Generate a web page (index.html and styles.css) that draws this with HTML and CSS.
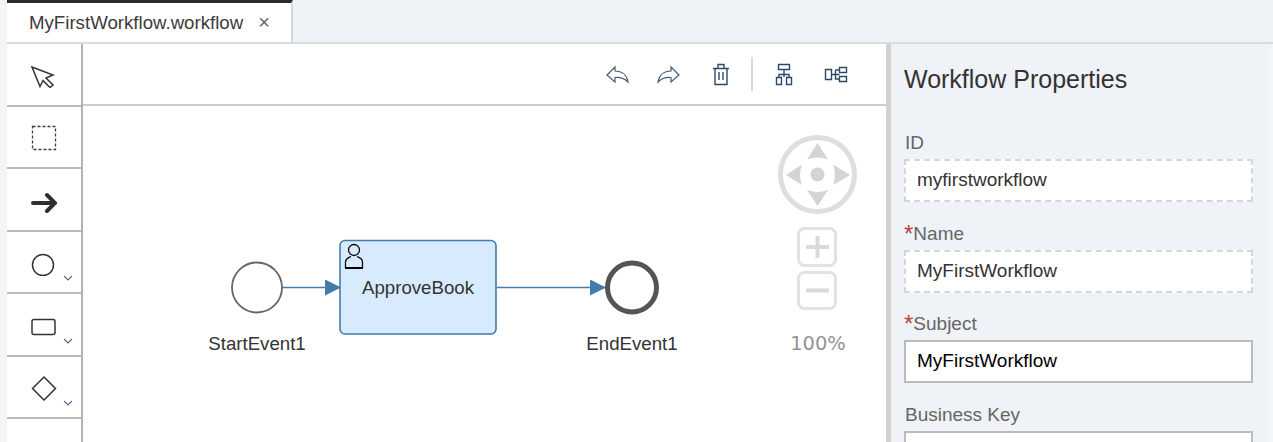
FILE: index.html
```html
<!DOCTYPE html>
<html lang="en">
<head>
    <meta charset="UTF-8">
    <title>MyFirstWorkflow.workflow</title>
    <link rel="stylesheet" href="styles.css">
</head>
<body>
    <div class="shell">
        <div class="tabbar">
            <div class="tab">
                <span class="tab-name">MyFirstWorkflow.workflow</span>
                <span class="tab-close">×</span>
            </div>
        </div>

        <div class="editor">
            <div class="palette">
                <div class="palette-item">
                    <svg width="28" height="28" viewBox="0 0 28 28"><path class="pal-line" d="M3 7 L24 15 L17 18 L24 25 L21 27.5 L14 20.5 L11 26.5 Z"/></svg>
                </div>
                <div class="palette-item">
                    <svg width="28" height="28" viewBox="0 0 28 28"><rect x="3.5" y="3.5" width="23" height="23" fill="none" stroke="#3a3a4a" stroke-width="1.3" stroke-dasharray="3 2"/></svg>
                </div>
                <div class="palette-item">
                    <svg width="28" height="28" viewBox="0 0 28 28"><path d="M4 18 H26 M18 10 L26 18 L18 26" fill="none" stroke="#2f2f2f" stroke-width="4" stroke-linecap="round"/></svg>
                </div>
                <div class="palette-item">
                    <svg width="28" height="28" viewBox="0 0 28 28"><circle class="pal-line" cx="14" cy="17" r="10.5"/></svg>
                    <svg class="chevron" width="10" height="6" viewBox="0 0 10 6"><path d="M1 1 L5 5 L9 1" fill="none" stroke="#4a6a88" stroke-width="1.1"/></svg>
                </div>
                <div class="palette-item">
                    <svg width="28" height="28" viewBox="0 0 28 28"><rect class="pal-line" x="3" y="9.5" width="23" height="15" rx="2"/></svg>
                    <svg class="chevron" width="10" height="6" viewBox="0 0 10 6"><path d="M1 1 L5 5 L9 1" fill="none" stroke="#4a6a88" stroke-width="1.1"/></svg>
                </div>
                <div class="palette-item">
                    <svg width="28" height="28" viewBox="0 0 28 28"><path class="pal-line" d="M15 4 L26.5 15.5 L15 27 L3.5 15.5 Z"/></svg>
                    <svg class="chevron" width="10" height="6" viewBox="0 0 10 6"><path d="M1 1 L5 5 L9 1" fill="none" stroke="#4a6a88" stroke-width="1.1"/></svg>
                </div>
            </div>

            <div class="workspace">
                <div class="toolbar">
                    <svg class="tool" width="24" height="24" viewBox="0 0 24 24"><path d="M2 13 L10 5 V9 C17 9 22 13 23 20 C19 16 15 15 10 15.5 V20 Z"/></svg>
                    <svg class="tool" width="24" height="24" viewBox="0 0 24 24"><path d="M23 13 L15 5 V9 C8 9 3 13 2 20 C6 16 10 15 15 15.5 V20 Z"/></svg>
                    <svg class="tool tool-dark" width="24" height="24" viewBox="0 0 24 24"><path d="M6 6.5 H22 M11 6.5 V2.5 H17 V6.5 M8 6.5 V22.5 H20 V6.5 M12 10 V18 M16 10 V18"/></svg>
                    <span class="tool-sep"></span>
                    <svg class="tool tool-dark" width="24" height="24" viewBox="0 0 24 24"><path d="M5.5 2.5 H16.5 V7.5 H5.5 Z M11 7.5 V15 M6 15 V12.5 H16 V15 M3.5 15.5 H8.5 V22.5 H3.5 Z M13.5 15.5 H18.5 V22.5 H13.5 Z"/></svg>
                    <svg class="tool tool-dark" width="24" height="24" viewBox="0 0 24 24"><path d="M1.5 7.5 H7.5 V17.5 H1.5 Z M15.5 5.5 H22.5 V10.5 H15.5 Z M15.5 14.5 H22.5 V19.5 H15.5 Z M7.5 12.5 H15.5 M11.5 8 H15.5 M11.5 8 V17 H15.5"/></svg>
                </div>

                <div class="canvas">
                    <svg class="diagram" width="803" height="336" viewBox="83 106 803 336">
                        <defs>
                            <marker id="arrowhead" markerUnits="userSpaceOnUse" markerWidth="16" markerHeight="16" refX="16" refY="8" orient="auto">
                                <path d="M0 0 L16 8 L0 16 Z" fill="#427cac"/>
                            </marker>
                        </defs>

                        <!-- flow -->
                        <line class="flow" x1="282" y1="287.5" x2="341" y2="287.5" marker-end="url(#arrowhead)"/>
                        <line class="flow" x1="497" y1="287.5" x2="606" y2="287.5" marker-end="url(#arrowhead)"/>

                        <circle cx="257" cy="287.5" r="25" fill="#fff" stroke="#666" stroke-width="1.8"/>
                        <text class="node-label" x="257" y="350">StartEvent1</text>

                        <rect x="340" y="240.5" width="156" height="93.5" rx="5" fill="#d8ebfe" stroke="#427cac" stroke-width="1.6"/>
                        <circle cx="354" cy="250" r="5.5" fill="none" stroke="#000" stroke-width="1.3"/>
                        <path d="M345.5 268 V262 C345.5 258.5 349 257.5 351 256.5 M357 256.5 C359 257.5 362.5 258.5 362.5 262 V268" fill="none" stroke="#000" stroke-width="1.3"/>
                        <path d="M345 268 H363" stroke="#000" stroke-width="2"/>
                        <text class="node-label" x="418" y="294">ApproveBook</text>

                        <circle cx="632" cy="287.5" r="24.5" fill="#fff" stroke="#555" stroke-width="5"/>
                        <text class="node-label" x="632" y="350">EndEvent1</text>

                        <!-- navigator -->
                        <circle cx="817.5" cy="174.5" r="37" fill="#fff" stroke="#dedede" stroke-width="5"/>
                        <circle cx="817.5" cy="174.5" r="7" fill="#d4d4d4"/>
                        <path class="nav-arrow" d="M817.5 143 L828 159.5 Q817.5 155.5 807 159.5 Z"/>
                        <path class="nav-arrow" d="M817.5 206 L828 190 Q817.5 194 807 190 Z"/>
                        <path class="nav-arrow" d="M786 175 L802 164.5 Q798 175 802 185 Z"/>
                        <path class="nav-arrow" d="M850 175 L833 164.5 Q837 175 833 185 Z"/>

                        <rect class="zoom-btn" x="798.5" y="228.5" width="37" height="37" rx="6"/>
                        <path class="zoom-sign" d="M806 247 H829 M817.5 236 V258"/>
                        <rect class="zoom-btn" x="798.5" y="272.5" width="37" height="36" rx="6"/>
                        <path class="zoom-sign" d="M806 290.5 H829"/>
                        <text class="zoom-level" x="818" y="350">100%</text>
                    </svg>
                </div>
            </div>

            <div class="properties">
                <h2 class="prop-title">Workflow Properties</h2>

                <div class="field">
                    <label class="field-label">ID</label>
                    <div class="field-input readonly">myfirstworkflow</div>
                </div>
                <div class="field">
                    <label class="field-label"><span class="req">*</span>Name</label>
                    <div class="field-input readonly">MyFirstWorkflow</div>
                </div>
                <div class="field">
                    <label class="field-label"><span class="req">*</span>Subject</label>
                    <div class="field-input">MyFirstWorkflow</div>
                </div>
                <div class="field">
                    <label class="field-label">Business Key</label>
                    <div class="field-input"></div>
                </div>
            </div>
        </div>
    </div>
</body>
</html>
```

FILE: styles.css
```css
html, body {
    margin: 0;
    height: 100%;
    overflow: hidden;
}

body {
    font-family: "Liberation Sans", Arial, sans-serif;
    background: #f3f5f8;
    color: #333;
}

.shell {
    height: 442px;
    margin-left: 7px;
    overflow: hidden;
}

.tabbar {
    height: 42px;
    background: #eff2f7;
    border-bottom: 2px solid #d9dbe0;
    display: flex;
}

.tab {
    width: 286px;
    height: 42px;
    box-sizing: border-box;
    background: #fff;
    border-top: 3px solid #2b2b2b;
    border-right: 2px solid #d5d7db;
    padding-left: 22px;
    display: flex;
    align-items: center;
    gap: 15px;
}

.tab-name {
    font-size: 18.67px;
    color: #3c3c3c;
}

.tab-close {
    font-size: 20px;
    color: #666;
}

.editor {
    display: flex;
    height: 398px;
}

.palette {
    width: 74px;
    background: #fff;
    border-right: 2px solid #b3b3b3;
    flex-shrink: 0;
}

.palette-item {
    height: 62.5px;
    box-sizing: border-box;
    border-bottom: 2px solid #b9b9b9;
    padding-left: 22px;
    position: relative;
    display: flex;
    align-items: center;
}

.pal-line {
    fill: none;
    stroke: #33333f;
    stroke-width: 1.5;
}

.chevron {
    position: absolute;
    left: 56px;
    bottom: 11px;
}

.workspace {
    width: 803px;
    flex-shrink: 0;
    background: #fff;
}

.toolbar {
    height: 62px;
    box-sizing: border-box;
    border-bottom: 2px solid #ccc;
    padding-right: 38px;
    display: flex;
    justify-content: flex-end;
    align-items: center;
    gap: 27px;
}

.tool {
    fill: none;
    stroke: #3f5c78;
    stroke-width: 1.2;
}

.tool-dark {
    stroke: #2c4a68;
    stroke-width: 1.4;
}

.tool-sep {
    width: 2px;
    height: 34px;
    background: #d6dadf;
    margin: 0 -7px;
}

.canvas {
    height: 336px;
}

.diagram {
    display: block;
}

.flow {
    stroke: #427cac;
    stroke-width: 1.6;
}

.node-label {
    font-size: 18.67px;
    fill: #333;
    text-anchor: middle;
}

.nav-arrow {
    fill: #d4d4d4;
}

.zoom-btn {
    fill: #fff;
    stroke: #e2e2e2;
    stroke-width: 3;
}

.zoom-sign {
    fill: none;
    stroke: #dadada;
    stroke-width: 4;
}

.zoom-level {
    font-family: "DejaVu Sans", sans-serif;
    font-size: 19.5px;
    fill: #949494;
    text-anchor: middle;
}

.properties {
    width: 382px;
    flex-shrink: 0;
    box-sizing: border-box;
    background: #eff2f7;
    border-left: 5px solid #d2d2d2;
    padding: 0 15px 0 13px;
}

.prop-title {
    margin: 0;
    font-size: 25px;
    font-weight: normal;
    line-height: 28px;
    padding-top: 21px;
    height: 72px;
    box-sizing: border-box;
    color: #333;
}

.field {
    height: 90.5px;
}

.field-label {
    display: block;
    font-size: 19px;
    line-height: 24px;
    padding-top: 15px;
    color: #666;
    padding-left: 1px;
    height: 43px;
    box-sizing: border-box;
}

.req {
    color: #bf3e3e;
    font-size: 24px;
    line-height: 18px;
    vertical-align: -2px;
    margin-left: -1px;
}

.field-input {
    height: 43px;
    box-sizing: border-box;
    border: 2px solid #bbb;
    background: #fff;
    padding: 0 11px;
    font-size: 19px;
    line-height: 37px;
    color: #000;
}

.field-input.readonly {
    border: 2px dashed #d6d6d6;
    color: #333;
}
```
